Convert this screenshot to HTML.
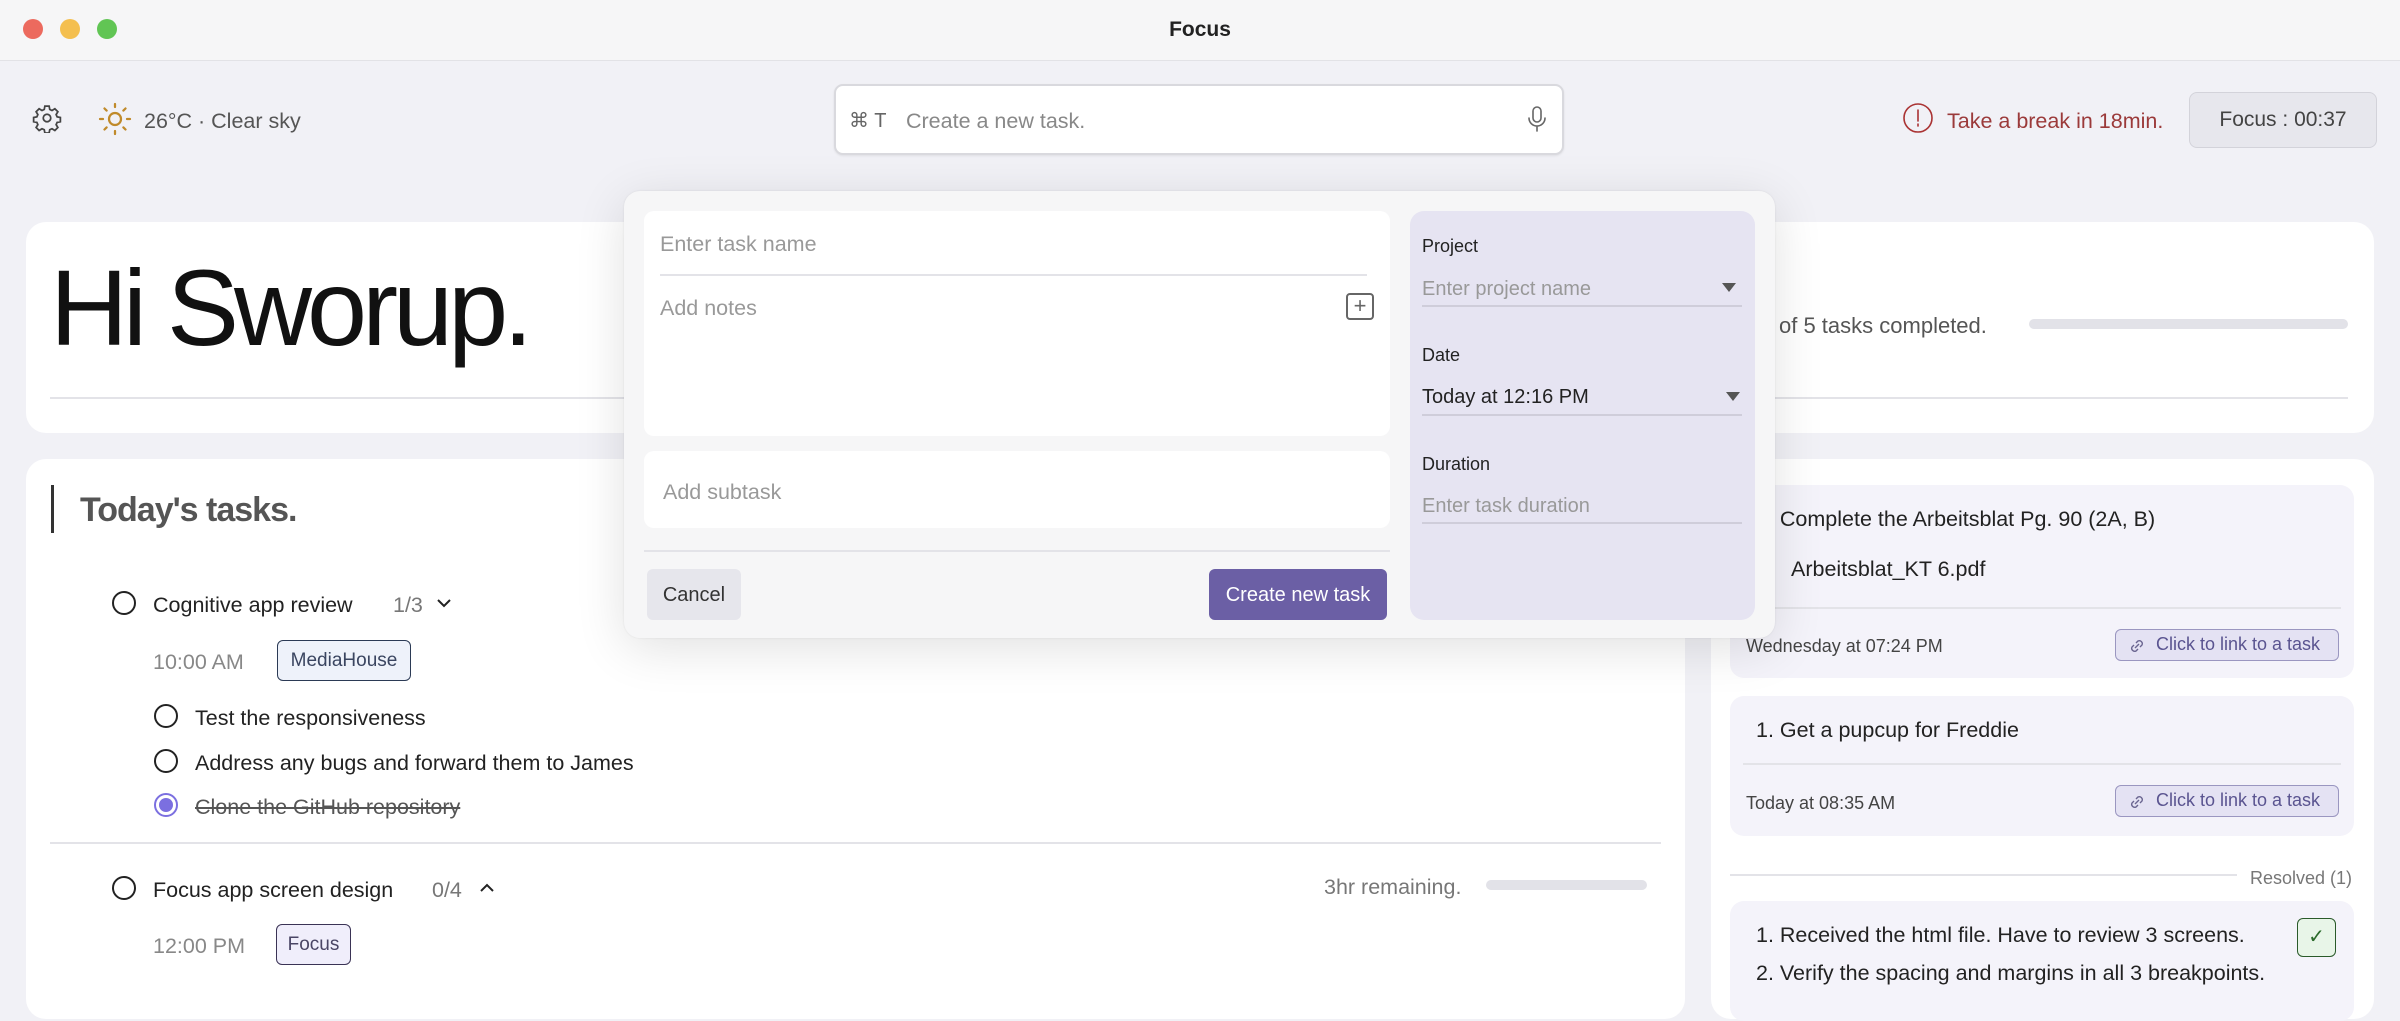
<!DOCTYPE html>
<html><head><meta charset="utf-8"><style>
*{margin:0;padding:0;box-sizing:border-box}
body{width:2400px;height:987px;overflow:hidden;background:#f1f1f6;font-family:"Liberation Sans",Arial,sans-serif;position:relative;color:#222}
.a{position:absolute;white-space:nowrap}
.t{position:absolute;white-space:nowrap;height:30px;line-height:30px;font-size:21.5px;margin-top:2px}
.circ{position:absolute;width:24px;height:24px;border:2px solid #222;border-radius:50%}
.line{position:absolute;height:2px;background:#e3e3e8}
.link{position:absolute;left:2115px;width:224px;height:32px;border:1.5px solid #9a96c0;background:#e4e2f3;border-radius:6px;color:#5a5490;font-size:18px;line-height:29px;padding-left:40px}
.link svg{position:absolute;left:11px;top:6px}
</style></head><body>
<!-- title bar -->
<div class="a" style="left:0;top:0;width:2400px;height:61px;background:#f6f6f7;border-bottom:1.5px solid #e2e2e6"></div>
<div class="a" style="left:23px;top:19px;width:20px;height:20px;border-radius:50%;background:#ec6a5e"></div>
<div class="a" style="left:60px;top:19px;width:20px;height:20px;border-radius:50%;background:#f4bf4f"></div>
<div class="a" style="left:97px;top:19px;width:20px;height:20px;border-radius:50%;background:#61c554"></div>
<div class="t" style="left:1100px;width:200px;text-align:center;top:13px;font-weight:bold;font-size:21px">Focus</div>

<!-- top bar -->
<svg class="a" style="left:32px;top:103px" width="30" height="30" viewBox="0 0 24 24" fill="none" stroke="#444" stroke-width="1.4"><path d="M10.3 2.5h3.4l.5 2.6 1.8.9 2.3-1.4 2.4 2.4-1.4 2.3.8 1.8 2.6.5v3.4l-2.6.5-.8 1.8 1.4 2.3-2.4 2.4-2.3-1.4-1.8.8-.5 2.6h-3.4l-.5-2.6-1.8-.8-2.300 1.4-2.4-2.4 1.4-2.3-.8-1.8-2.6-.5v-3.4l2.6-.5.8-1.8-1.4-2.3 2.4-2.4 2.3 1.4 1.8-.9z"/><circle cx="12" cy="12" r="3"/></svg>
<svg class="a" style="left:97px;top:101px" width="36" height="36" viewBox="0 0 24 24" fill="none" stroke="#c08a2a" stroke-width="1.5" stroke-linecap="round"><circle cx="12" cy="12" r="4"/><path d="M12 2v2M12 20v2M2 12h2M20 12h2M5 5l1.4 1.4M17.6 17.6L19 19M5 19l1.4-1.4M17.6 6.4L19 5"/></svg>
<div class="t" style="left:144px;top:104px;color:#555">26°C · Clear sky</div>

<div class="a" style="left:834px;top:84px;width:730px;height:71px;background:#fff;border:2px solid #d9d9de;border-radius:9px;box-shadow:0 1px 2px rgba(0,0,0,.08)"></div>
<div class="t" style="left:849px;top:104px;color:#666;font-size:20px">⌘ T</div>
<div class="t" style="left:906px;top:104px;color:#888">Create a new task.</div>
<svg class="a" style="left:1525px;top:105px" width="24" height="28" viewBox="0 0 24 28" fill="none" stroke="#666" stroke-width="1.6" stroke-linecap="round"><rect x="8" y="2" width="8" height="15" rx="4"/><path d="M4 13a8 8 0 0 0 16 0M12 21v5"/></svg>

<svg class="a" style="left:1902px;top:102px" width="32" height="32" viewBox="0 0 32 32" fill="none" stroke="#a33" stroke-width="1.6"><circle cx="16" cy="16" r="14"/><path d="M16 8v11M16 22v2" stroke-linecap="round"/></svg>
<div class="t" style="left:1947px;top:104px;color:#9b3a3a">Take a break in 18min.</div>
<div class="a" style="left:2189px;top:92px;width:188px;height:56px;background:#e7e7ed;border:1.5px solid #d3d3da;border-radius:8px;text-align:center;line-height:53px;font-size:21px;color:#444">Focus : 00:37</div>

<!-- greeting card -->
<div class="a" style="left:26px;top:222px;width:2348px;height:211px;background:#fff;border-radius:20px"></div>
<div class="a" style="left:50px;top:248px;font-size:108px;line-height:120px;letter-spacing:-5px;color:#111">Hi Sworup.</div>
<div class="line" style="left:50px;top:397px;width:2298px"></div>
<div class="t" style="left:1779px;top:309px;color:#555;font-size:22px">of 5 tasks completed.</div>
<div class="a" style="left:2029px;top:319px;width:319px;height:10px;background:#e2e2e8;border-radius:5px"></div>

<!-- tasks card -->
<div class="a" style="left:26px;top:459px;width:1659px;height:560px;background:#fff;border-radius:20px"></div>
<div class="a" style="left:51px;top:485px;width:3px;height:48px;background:#333"></div>
<div class="a" style="left:80px;top:490px;font-size:34px;line-height:40px;font-weight:bold;color:#555;letter-spacing:-1px">Today's tasks.</div>

<div class="circ" style="left:112px;top:591px"></div>
<div class="t" style="left:153px;top:588px">Cognitive app review</div>
<div class="t" style="left:393px;top:588px;color:#777">1/3</div>
<svg class="a" style="left:436px;top:597px" width="16" height="12" viewBox="0 0 16 12" fill="none" stroke="#222" stroke-width="2"><path d="M2 3l6 6 6-6"/></svg>
<div class="t" style="left:153px;top:645px;color:#888">10:00 AM</div>
<div class="a" style="left:277px;top:640px;width:134px;height:41px;background:#eef2fa;border:1.5px solid #2b3a55;border-radius:6px;font-size:19px;line-height:40px;text-align:center;color:#3a4560">MediaHouse</div>

<div class="circ" style="left:154px;top:704px"></div>
<div class="t" style="left:195px;top:701px">Test the responsiveness</div>
<div class="circ" style="left:154px;top:749px"></div>
<div class="t" style="left:195px;top:746px">Address any bugs and forward them to James</div>
<div class="a" style="left:154px;top:793px;width:24px;height:24px;border:2px solid #7b6fe0;border-radius:50%;background:#fff"><div style="margin:3px;width:14px;height:14px;border-radius:50%;background:#7b6fe0"></div></div>
<div class="t" style="left:195px;top:790px;color:#555;text-decoration:line-through">Clone the GitHub repository</div>

<div class="line" style="left:50px;top:842px;width:1611px"></div>

<div class="circ" style="left:112px;top:876px"></div>
<div class="t" style="left:153px;top:873px">Focus app screen design</div>
<div class="t" style="left:432px;top:873px;color:#777">0/4</div>
<svg class="a" style="left:479px;top:882px" width="16" height="12" viewBox="0 0 16 12" fill="none" stroke="#222" stroke-width="2"><path d="M2 9l6-6 6 6"/></svg>
<div class="t" style="left:1324px;top:870px;color:#777">3hr remaining.</div>
<div class="a" style="left:1486px;top:880px;width:161px;height:10px;background:#e2e2e8;border-radius:5px"></div>
<div class="t" style="left:153px;top:929px;color:#888">12:00 PM</div>
<div class="a" style="left:276px;top:924px;width:75px;height:41px;background:#f0eefb;border:1.5px solid #3a3355;border-radius:6px;font-size:19px;line-height:40px;text-align:center;color:#4a4565">Focus</div>

<!-- right card -->
<div class="a" style="left:1711px;top:459px;width:663px;height:560px;background:#fff;border-radius:20px"></div>
<div class="a" style="left:1730px;top:485px;width:624px;height:193px;background:#f4f3fa;border-radius:14px"></div>
<div class="t" style="left:1756px;top:502px;font-size:21.5px">1. Complete the Arbeitsblat Pg. 90 (2A, B)</div>
<div class="a" style="left:1767px;top:556px;width:8px;height:20px;color:#d33;font-size:14px">▪</div>
<div class="t" style="left:1791px;top:552px;font-size:21.5px">Arbeitsblat_KT 6.pdf</div>
<div class="line" style="left:1743px;top:607px;width:598px"></div>
<div class="t" style="left:1746px;top:629px;font-size:18px;color:#444">Wednesday at 07:24 PM</div>
<div class="link" style="top:629px"><svg width="20" height="20" viewBox="0 0 20 20" fill="none" stroke="#6a6590" stroke-width="1.4"><path d="M8 12l4-4M7 9l-2 2a3 3 0 0 0 4 4l2-2M13 11l2-2a3 3 0 0 0-4-4L9 7"/></svg>Click to link to a task</div>

<div class="a" style="left:1730px;top:696px;width:624px;height:140px;background:#f4f3fa;border-radius:14px"></div>
<div class="t" style="left:1756px;top:713px;font-size:21.5px">1. Get a pupcup for Freddie</div>
<div class="line" style="left:1743px;top:763px;width:598px"></div>
<div class="t" style="left:1746px;top:786px;font-size:18px;color:#444">Today at 08:35 AM</div>
<div class="link" style="top:785px"><svg width="20" height="20" viewBox="0 0 20 20" fill="none" stroke="#6a6590" stroke-width="1.4"><path d="M8 12l4-4M7 9l-2 2a3 3 0 0 0 4 4l2-2M13 11l2-2a3 3 0 0 0-4-4L9 7"/></svg>Click to link to a task</div>

<div class="line" style="left:1730px;top:874px;width:507px"></div>
<div class="t" style="left:2250px;top:861px;font-size:18px;color:#777">Resolved (1)</div>
<div class="a" style="left:1730px;top:901px;width:624px;height:120px;background:#f4f3fa;border-radius:14px"></div>
<div class="t" style="left:1756px;top:918px;font-size:21.5px">1. Received the html file. Have to review 3 screens.</div>
<div class="t" style="left:1756px;top:956px;font-size:21.5px">2. Verify the spacing and margins in all 3 breakpoints.</div>
<div class="a" style="left:2297px;top:918px;width:39px;height:39px;background:#e8f5e8;border:1.5px solid #2a5a2a;border-radius:6px;color:#2a6a2a;text-align:center;line-height:37px;font-size:20px">✓</div>

<!-- modal -->
<div class="a" style="left:624px;top:191px;width:1151px;height:447px;background:#f6f6f7;border-radius:16px;box-shadow:0 10px 50px rgba(0,0,0,.12),0 0 2px rgba(0,0,0,.08)"></div>
<div class="a" style="left:644px;top:211px;width:746px;height:225px;background:#fff;border-radius:10px"></div>
<div class="t" style="left:660px;top:227px;color:#999">Enter task name</div>
<div class="line" style="left:660px;top:274px;width:707px"></div>
<div class="t" style="left:660px;top:291px;color:#999">Add notes</div>
<div class="a" style="left:1346px;top:293px;width:28px;height:27px;border:2px solid #666;border-radius:4px;color:#666;text-align:center;line-height:22px;font-size:22px">+</div>
<div class="a" style="left:644px;top:451px;width:746px;height:77px;background:#fff;border-radius:10px"></div>
<div class="t" style="left:663px;top:475px;color:#999">Add subtask</div>
<div class="line" style="left:644px;top:550px;width:746px"></div>
<div class="a" style="left:647px;top:569px;width:94px;height:51px;background:#e6e6ec;border-radius:6px;text-align:center;line-height:53px;font-size:20px;color:#333">Cancel</div>
<div class="a" style="left:1209px;top:569px;width:178px;height:51px;background:#6b5fa5;border-radius:6px;text-align:center;line-height:53px;font-size:20px;color:#fff">Create new task</div>

<div class="a" style="left:1410px;top:211px;width:345px;height:409px;background:#e6e4f2;border-radius:14px"></div>
<div class="t" style="left:1422px;top:229px;font-size:18px">Project</div>
<div class="t" style="left:1422px;top:272px;color:#999;font-size:20px">Enter project name</div>
<div class="a" style="left:1722px;top:283px;width:0;height:0;border-left:7px solid transparent;border-right:7px solid transparent;border-top:9px solid #555"></div>
<div class="line" style="left:1422px;top:305px;width:320px;background:#cfcdda"></div>
<div class="t" style="left:1422px;top:338px;font-size:18px">Date</div>
<div class="t" style="left:1422px;top:380px;font-size:20px">Today at 12:16 PM</div>
<div class="a" style="left:1726px;top:392px;width:0;height:0;border-left:7px solid transparent;border-right:7px solid transparent;border-top:9px solid #555"></div>
<div class="line" style="left:1422px;top:414px;width:320px;background:#cfcdda"></div>
<div class="t" style="left:1422px;top:447px;font-size:18px">Duration</div>
<div class="t" style="left:1422px;top:489px;color:#999;font-size:20px">Enter task duration</div>
<div class="line" style="left:1422px;top:522px;width:320px;background:#cfcdda"></div>
</body></html>
